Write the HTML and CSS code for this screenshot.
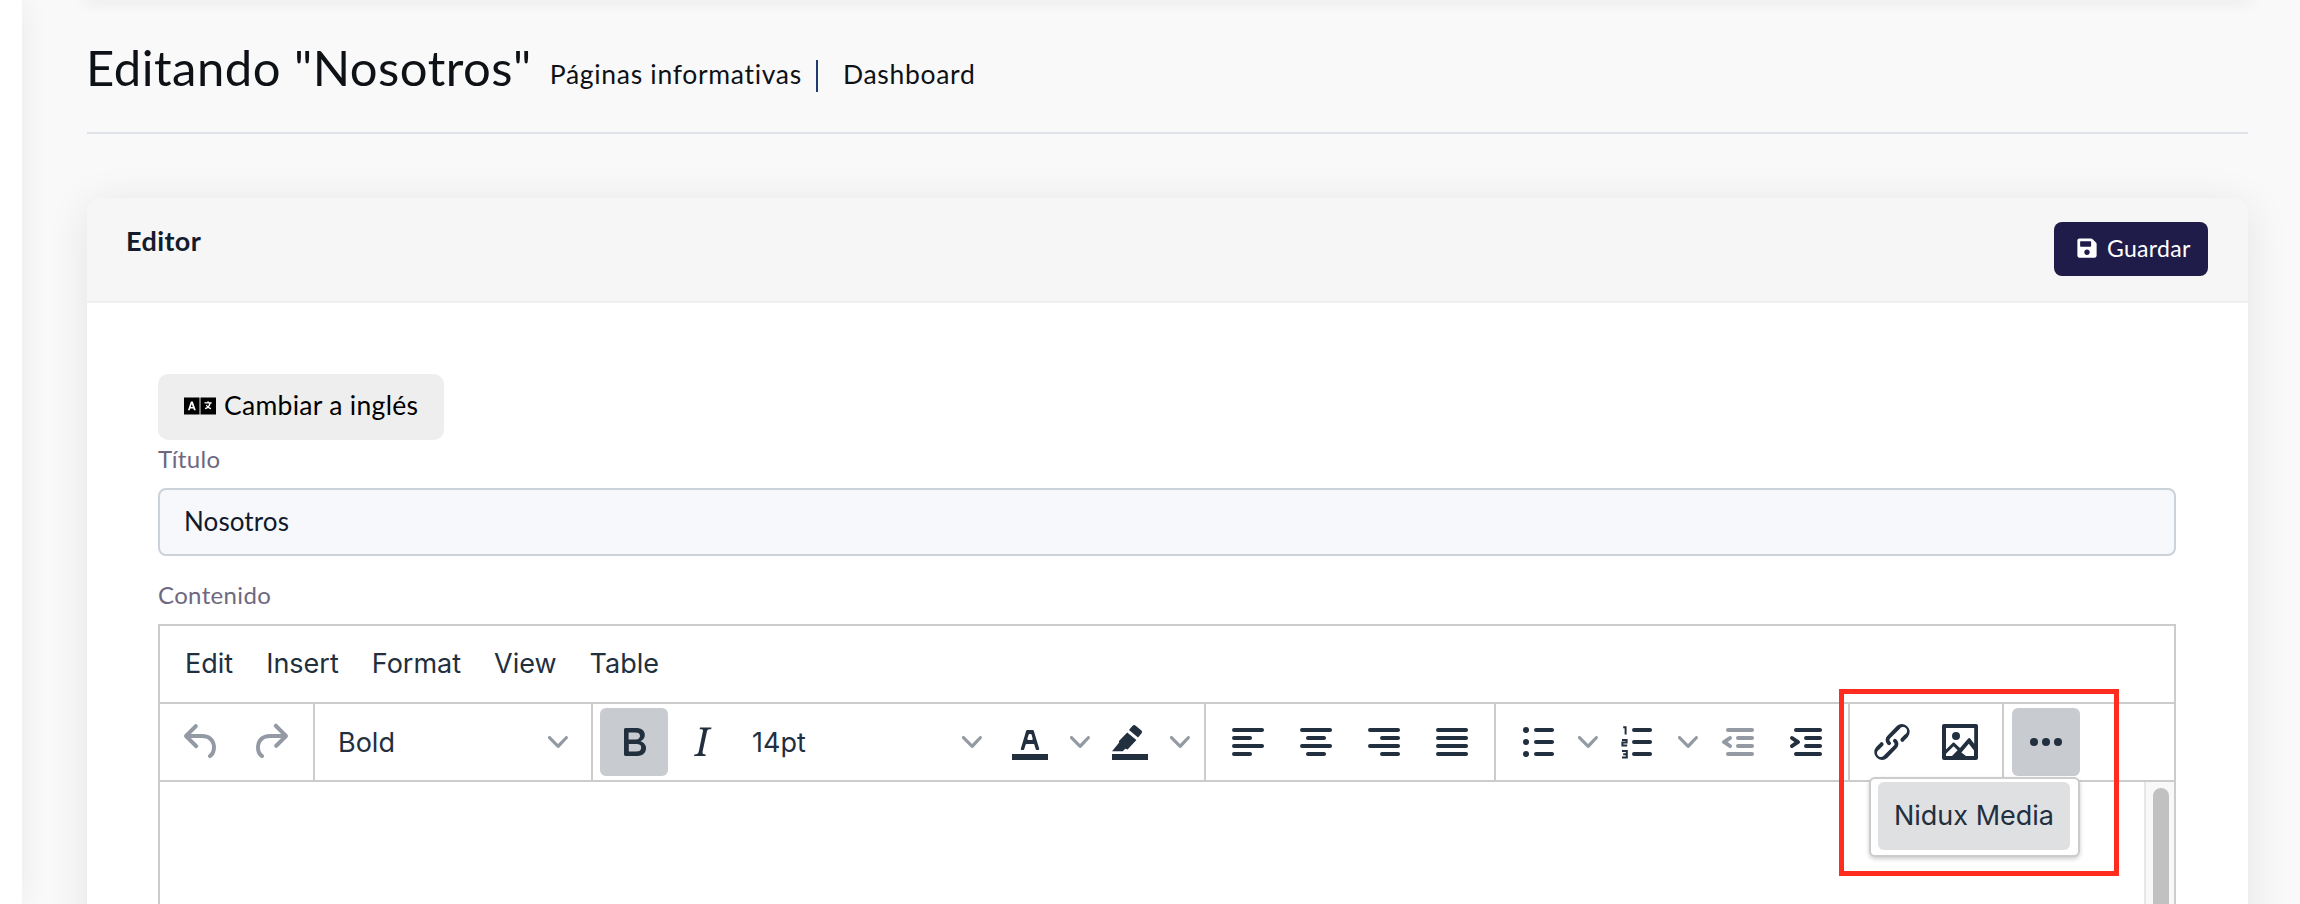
FILE: index.html
```html
<!DOCTYPE html>
<html lang="es">
<head>
<meta charset="utf-8">
<title>Editando "Nosotros"</title>
<link rel="stylesheet" href="styles.css">
</head>
<body>
<svg class="defs" width="0" height="0" aria-hidden="true">
  <symbol id="chev" viewBox="0 0 10 10"><path d="M8.7 2.2c.3-.3.8-.3 1 0 .4.4.4.9 0 1.2L5.7 7.8c-.3.3-.9.3-1.2 0L.2 3.4a.8.8 0 010-1.2c.3-.3.8-.3 1.1 0L5 6l3.7-3.8z"/></symbol>
</svg>
<div class="shell">
  <aside class="rail"></aside>
  <main class="main">
    <div class="topbar"></div>
    <header class="pagehead">
      <h1 class="title">Editando "Nosotros"</h1>
      <nav class="crumbs">
        <a class="crumb crumb-first">Páginas informativas</a>
        <a class="crumb">Dashboard</a>
      </nav>
    </header>
    <section class="card">
      <div class="card-head">
        <span class="card-title">Editor</span>
        <button class="save">
          <svg class="save-icon" viewBox="0 0 448 512"><path d="M433.9 129.9l-83.9-83.9A48 48 0 0 0 316.1 32H48C21.5 32 0 53.5 0 80v352c0 26.5 21.5 48 48 48h352c26.5 0 48-21.5 48-48V163.9a48 48 0 0 0-14.1-34zM224 416c-35.3 0-64-28.7-64-64 0-35.3 28.7-64 64-64s64 28.7 64 64c0 35.3-28.7 64-64 64zm96-304.5V212c0 6.6-5.4 12-12 12H76c-6.6 0-12-5.4-12-12V108c0-6.6 5.4-12 12-12h228.5c3.2 0 6.2 1.3 8.5 3.500l3.500 3.500c2.200 2.200 3.500 5.300 3.500 8.500z"/></svg>
          <span>Guardar</span>
        </button>
      </div>
      <div class="card-body">
        <button class="lang">
          <svg class="lang-icon" viewBox="0 0 32 18"><rect x="0" y="0.500" width="15.500" height="17" fill="#000"/><rect x="16.500" y="0.500" width="15.500" height="17" fill="#000"/><path fill="#fff" d="M6.900 4.500h1.900l3 8.800H9.900l-.5-1.700H6.200l-.5 1.700H3.900zm.9 2.400l-1 3.100h2z"/><path fill="#fff" d="M23.500 4.300h1.200v1h3v1.200h-1c-.3 1.500-.9 2.700-1.700 3.600.6.400 1.300.7 2.200 1l-.5 1.200c-1-.3-1.900-.8-2.600-1.300-.8.600-1.700 1-2.800 1.300l-.5-1.200c.9-.2 1.700-.6 2.300-1-.5-.6-.9-1.200-1.200-1.900l1.100-.4c.2.500.5 1 .9 1.500.6-.7 1-1.600 1.200-2.800H20.500V5.300h3z"/></svg>
          <span>Cambiar a inglés</span>
        </button>
        <label class="field-label field-label-first">Título</label>
        <div class="input">Nosotros</div>
        <label class="field-label">Contenido</label>
        <div class="editor">
          <div class="menubar">
            <span class="menu-item">Edit</span>
            <span class="menu-item">Insert</span>
            <span class="menu-item">Format</span>
            <span class="menu-item">View</span>
            <span class="menu-item">Table</span>
          </div>
          <div class="toolbar">
            <div class="group group-history">
              <span class="tbtn off"><svg class="ico" viewBox="0 0 24 24"><path d="M6.400 8H12c3.700 0 6.200 2 6.800 5.100.6 2.700-.4 5.600-2.300 6.800a1 1 0 01-1-1.800c1.100-.6 1.800-2.700 1.400-4.600-.5-2.100-2.100-3.500-4.900-3.500H6.400l3.300 3.300a1 1 0 11-1.400 1.400l-5-5a1 1 0 010-1.400l5-5a1 1 0 011.400 1.400L6.400 8z"/></svg></span>
              <span class="tbtn off"><svg class="ico" viewBox="0 0 24 24"><path d="M17.600 10H12c-2.800 0-4.400 1.400-4.900 3.500-.4 2 .3 4 1.400 4.600a1 1 0 11-1 1.800c-2-1.200-2.900-4.100-2.300-6.800.6-3 3-5.100 6.800-5.100h5.600l-3.300-3.300a1 1 0 111.400-1.400l5 5a1 1 0 010 1.400l-5 5a1 1 0 01-1.400-1.400l3.300-3.300z"/></svg></span>
            </div>
            <div class="group group-select">
              <span class="select select-format"><span>Bold</span><svg class="chev"><use href="#chev"/></svg></span>
            </div>
            <div class="group group-format">
              <span class="tbtn on"><svg class="ico" viewBox="0 0 24 24"><path d="M7.800 19c-.3 0-.5 0-.6-.2l-.2-.5V5.700c0-.2 0-.4.2-.5l.6-.2h5c1.500 0 2.700.3 3.500 1 .7.600 1.100 1.400 1.100 2.500a3 3 0 01-.6 1.900c-.4.600-1 1-1.600 1.200.4.100.9.300 1.300.6s.8.700 1 1.200c.4.400.5 1 .5 1.600 0 1.300-.4 2.300-1.300 3-.8.700-2.100 1-3.800 1H7.800zm5-8.300c.6 0 1.200-.1 1.600-.5.400-.3.6-.7.6-1.300 0-1.100-.8-1.700-2.300-1.700H9.300v3.500h3.500zm.5 6c.7 0 1.300-.1 1.700-.4.400-.4.6-.9.6-1.500s-.2-1-.7-1.400c-.4-.3-1-.4-2-.4H9.400v3.800h3.900z"/></svg></span>
              <span class="tbtn"><svg class="ico" viewBox="0 0 24 24"><path d="M16.700 4.700l-.1.9h-.3c-.6 0-1 0-1.400.3-.3.3-.4.600-.5 1.100l-2.100 9.800v.6c0 .5.400.8 1.400.8h.2l-.2.8H8l.2-.8h.2c1.100 0 1.800-.5 2-1.500l2-9.800.1-.5c0-.6-.4-.8-1.400-.8h-.3l.2-.9h5.800z"/></svg></span>
              <span class="select select-size"><span>14pt</span><svg class="chev"><use href="#chev"/></svg></span>
              <span class="tbtn"><svg class="ico" viewBox="0 0 24 24"><path d="M3 18h18v3H3z"/><path fill-rule="evenodd" d="M8.700 16h-.8a.5.5 0 01-.5-.6l2.700-9c.1-.3.3-.4.500-.4h2.800c.2 0 .4.100.5.4l2.700 9a.5.5 0 01-.5.600h-.8a.5.5 0 01-.4-.4l-.7-2.200c0-.3-.3-.4-.5-.4h-3.400c-.2 0-.4.100-.5.4l-.7 2.200c0 .3-.2.400-.4.400zm2.600-7.600l-.6 2a.5.500 0 00.5.600h1.600a.5.500 0 00.5-.7l-.5-2c-.1-.2-.3-.3-.5-.3h-.5c-.2 0-.4.100-.5.400z"/></svg></span>
              <span class="splitchev"><svg class="chev"><use href="#chev"/></svg></span>
              <span class="tbtn"><svg class="ico" viewBox="0 0 24 24"><path d="M3 18h18v3H3z"/><path d="M13.300 3.900a1 1 0 011.400-.1l3 2.400a1 1 0 01.100 1.400l-1.800 2.200-4.500-3.800z"/><path d="M10.600 7.200L15.200 11l-4.400 4.800-1.200-.4-1.200 1.200H3l3.600-4.400-.2-.6z"/></svg></span>
              <span class="splitchev"><svg class="chev"><use href="#chev"/></svg></span>
            </div>
            <div class="group group-align">
              <span class="tbtn"><svg class="ico" viewBox="0 0 24 24"><path d="M5 5h14c.6 0 1 .4 1 1s-.4 1-1 1H5a1 1 0 110-2zm0 4h8c.6 0 1 .4 1 1s-.4 1-1 1H5a1 1 0 110-2zm0 8h8c.6 0 1 .4 1 1s-.4 1-1 1H5a1 1 0 010-2zm0-4h14c.6 0 1 .4 1 1s-.4 1-1 1H5a1 1 0 010-2z"/></svg></span>
              <span class="tbtn"><svg class="ico" viewBox="0 0 24 24"><path d="M5 5h14c.6 0 1 .4 1 1s-.4 1-1 1H5a1 1 0 110-2zm3 4h8c.6 0 1 .4 1 1s-.4 1-1 1H8a1 1 0 110-2zm0 8h8c.6 0 1 .4 1 1s-.4 1-1 1H8a1 1 0 010-2zm-3-4h14c.6 0 1 .4 1 1s-.4 1-1 1H5a1 1 0 010-2z"/></svg></span>
              <span class="tbtn"><svg class="ico" viewBox="0 0 24 24"><path d="M5 5h14c.6 0 1 .4 1 1s-.4 1-1 1H5a1 1 0 110-2zm6 4h8c.6 0 1 .4 1 1s-.4 1-1 1h-8a1 1 0 010-2zm0 8h8c.6 0 1 .4 1 1s-.4 1-1 1h-8a1 1 0 010-2zm-6-4h14c.6 0 1 .4 1 1s-.4 1-1 1H5a1 1 0 010-2z"/></svg></span>
              <span class="tbtn"><svg class="ico" viewBox="0 0 24 24"><path d="M5 5h14c.6 0 1 .4 1 1s-.4 1-1 1H5a1 1 0 110-2zm0 4h14c.6 0 1 .4 1 1s-.4 1-1 1H5a1 1 0 110-2zm0 4h14c.6 0 1 .4 1 1s-.4 1-1 1H5a1 1 0 010-2zm0 4h14c.6 0 1 .4 1 1s-.4 1-1 1H5a1 1 0 010-2z"/></svg></span>
            </div>
            <div class="group group-lists">
              <span class="tbtn"><svg class="ico" viewBox="0 0 24 24"><path d="M11 5h8c.6 0 1 .4 1 1s-.4 1-1 1h-8a1 1 0 010-2zm0 6h8c.6 0 1 .4 1 1s-.4 1-1 1h-8a1 1 0 010-2zm0 6h8c.6 0 1 .4 1 1s-.4 1-1 1h-8a1 1 0 010-2z"/><circle cx="6" cy="6" r="1.500"/><circle cx="6" cy="12" r="1.500"/><circle cx="6" cy="18" r="1.500"/></svg></span>
              <span class="splitchev"><svg class="chev"><use href="#chev"/></svg></span>
              <span class="tbtn"><svg class="ico" viewBox="0 0 24 24"><path d="M10 5h8c.6 0 1 .4 1 1s-.4 1-1 1h-8a1 1 0 010-2zm0 6h8c.6 0 1 .4 1 1s-.4 1-1 1h-8a1 1 0 010-2zm0 6h8c.6 0 1 .4 1 1s-.4 1-1 1h-8a1 1 0 010-2z"/><path class="digits" d="M4.600 4.600h1.200V8.300M4 11h2.300v1.300H4.200v1.400h2.400M4 16.500h2.400v3.300H4M4.600 18.100h1.800"/></svg></span>
              <span class="splitchev"><svg class="chev"><use href="#chev"/></svg></span>
              <span class="tbtn off"><svg class="ico" viewBox="0 0 24 24"><path d="M7 5h12c.6 0 1 .4 1 1s-.4 1-1 1H7a1 1 0 110-2zm5 4h7c.6 0 1 .4 1 1s-.4 1-1 1h-7a1 1 0 010-2zm0 4h7c.6 0 1 .4 1 1s-.4 1-1 1h-7a1 1 0 010-2zm-5 4h12a1 1 0 010 2H7a1 1 0 010-2zm1.600-3.800a1 1 0 01-1.200 1.600l-3-2a1 1 0 010-1.600l3-2a1 1 0 011.200 1.600L6.800 12l1.800 1.200z"/></svg></span>
              <span class="tbtn"><svg class="ico" viewBox="0 0 24 24"><path d="M7 5h12c.6 0 1 .4 1 1s-.4 1-1 1H7a1 1 0 110-2zm5 4h7c.6 0 1 .4 1 1s-.4 1-1 1h-7a1 1 0 010-2zm0 4h7c.6 0 1 .4 1 1s-.4 1-1 1h-7a1 1 0 010-2zm-5 4h12a1 1 0 010 2H7a1 1 0 010-2zm-2.600-3.800L6.200 12l-1.800-1.200a1 1 0 011.200-1.600l3 2a1 1 0 010 1.600l-3 2a1 1 0 11-1.200-1.600z"/></svg></span>
            </div>
            <div class="group group-insert">
              <span class="tbtn"><svg class="ico" viewBox="0 0 24 24"><path d="M6.200 12.300a1 1 0 011.400 1.400l-2 2a2 2 0 102.600 2.800l4.800-4.800a1 1 0 000-1.400 1 1 0 111.400-1.300 2.900 2.900 0 010 4L9.600 20a3.900 3.900 0 01-5.500-5.500l2-2zm11.600-.6a1 1 0 01-1.400-1.400l2-2a2 2 0 10-2.600-2.800L11 10.300a1 1 0 000 1.400A1 1 0 119.600 13a2.900 2.900 0 010-4L14.400 4a3.900 3.900 0 015.500 5.500l-2 2z"/></svg></span>
              <span class="tbtn"><svg class="ico" viewBox="0 0 24 24"><path fill-rule="evenodd" d="M4 3h16c.6 0 1 .4 1 1v16c0 .6-.4 1-1 1H4a1 1 0 01-1-1V4c0-.6.4-1 1-1zm1 2v10.700l3.300-3.200c.3-.3.700-.3 1 0L12 15l4.100-4.700c.3-.4.800-.4 1 0l2 2.600V5zm0 13.100V19h3l2.800-2.900-2-2L5 17.900zM19 19v-2.800l-2.600-3.300-3.700 4.300L15 19zM10 11a2 2 0 110-4 2 2 0 010 4z"/></svg></span>
            </div>
            <div class="group group-more">
              <span class="tbtn on"><svg class="ico" viewBox="0 0 24 24"><circle cx="6" cy="12" r="2"/><circle cx="12" cy="12" r="2"/><circle cx="18" cy="12" r="2"/></svg></span>
            </div>
          </div>
          <div class="editor-body">
            <div class="content"></div>
            <div class="scrolltrack"><div class="scrollthumb"></div></div>
          </div>
          <div class="drawer"><span class="drawer-item">Nidux Media</span></div>
          <div class="callout"></div>
        </div>
      </div>
    </section>
  </main>
</div>
</body>
</html>
```
FILE: styles.css
```css
* { box-sizing: border-box; }
html, body { margin: 0; height: 904px; overflow: hidden; background: #f9f9f9; }
body { font-family: "Lato", "Noto Sans", sans-serif; color: #0e1116; }
.defs { display: block; height: 0; }

.shell { display: flex; height: 904px; overflow: hidden; }
.rail { width: 22px; flex: none; background: #fff; box-shadow: 0 0 30px rgba(0,0,0,.07); position: relative; z-index: 1; }
.main { flex: 1; min-width: 0; padding: 0 52px 0 65px; }

.topbar { height: 0; box-shadow: 0 0 14px 3px rgba(0,0,0,.09); }

.pagehead { display: flex; align-items: flex-start; gap: 18px; height: 134px; padding-top: 37px; border-bottom: 2px solid #e0e3e9; }
.title { margin: 0 0 0 -1px; font-size: 49px; line-height: 60px; font-weight: 400; color: #0e1116; letter-spacing: .5px; }
.crumbs { display: flex; align-items: center; margin-top: 23px; }
.crumb { font-size: 26.5px; line-height: 28px; padding-bottom: 4px; color: #0e1116; letter-spacing: .7px; }
.crumb-first { padding-right: 14px; margin-right: 25px; border-right: 2px solid #1c3d6e; }

.card { margin-top: 64px; background: #fff; border-radius: 16px 16px 0 0; box-shadow: 0 6px 44px rgba(0,0,0,.09); }
.card-head { display: flex; justify-content: space-between; align-items: flex-start; padding: 24px 40px 25px 39px; background: #f6f6f6; border-bottom: 2px solid #efefef; border-radius: 16px 16px 0 0; }
.card-title { font-size: 27px; line-height: 38px; font-weight: 700; color: #131c2e; letter-spacing: .4px; }
.save { display: flex; align-items: center; gap: 10px; width: 154px; height: 54px; padding: 0 0 2px 23px; border: 0; border-radius: 8px; background: #1f1c4a; color: #fff; font: 400 23px "Lato", sans-serif; letter-spacing: .3px; }
.save-icon { width: 20px; height: 22px; fill: #fff; }

.card-body { padding: 71px 72px 0 71px; }
.lang { display: flex; align-items: center; gap: 8px; width: 286px; height: 66px; padding: 0 0 4px 26px; border: 0; border-radius: 10px; background: #eee; color: #000; font: 400 26.5px "Lato", sans-serif; letter-spacing: .3px; }
.lang-icon { width: 32px; height: 18px; margin-top: 2px; }

.field-label { display: block; margin-bottom: 16px; font-size: 24px; line-height: 26px; color: #6e6880; letter-spacing: .35px; }
.field-label-first { margin-top: 6px; }
.input { height: 68px; margin-bottom: 26px; padding: 0 24px; border: 2px solid #cbd2da; border-radius: 8px; background: #f6f8fb; font-size: 26px; line-height: 62px; color: #101a2b; letter-spacing: .1px; }

.editor { position: relative; border: 2px solid #ccc; color: #222f3e; font-family: "Inter", "Liberation Sans", sans-serif; }
.menubar { display: flex; align-items: center; gap: 33px; height: 78px; padding: 0 0 0 25px; border-bottom: 2px solid #ccc; font-size: 27px; }
.menu-item { line-height: 32px; }
.toolbar { display: flex; height: 78px; border-bottom: 2px solid #ccc; }
.group { display: flex; height: 76px; padding: 4px 8px; border-left: 2px solid #ccc; }
.group-history { padding: 4px 9px 4px 8px; border-left: 0; }
.group-select { padding: 0; }
.group-format { padding-left: 7px; }

.tbtn { display: flex; align-items: center; justify-content: center; flex: none; width: 68px; height: 68px; border-radius: 6px; fill: #222f3e; }
.tbtn.on { background: #c8cbcf; }
.tbtn.off { fill: #939aa3; }
.ico { width: 48px; height: 48px; }
.digits { fill: none; stroke: #222f3e; stroke-width: 1; }
.chev { width: 20px; height: 20px; fill: #939aa3; flex: none; }
.splitchev { display: flex; align-items: center; justify-content: center; flex: none; width: 32px; height: 68px; }
.select { display: flex; align-items: center; justify-content: space-between; font-size: 27px; flex: none; }
.select-format { width: 276px; padding: 0 23px 0 23px; }
.select-size { width: 260px; height: 68px; padding: 0 14px 0 16px; }

.editor-body { display: flex; height: 320px; }
.content { flex: 1; }
.scrolltrack { width: 30px; flex: none; padding: 6px 5px 0 7px; background: #f8f8f8; border-left: 2px solid #e6e6e6; }
.scrollthumb { height: 400px; border-radius: 8px; background: #c1c1c1; }

.drawer { position: absolute; left: 1709px; top: 151px; width: 211px; height: 80px; padding: 3px 8px 0 7px; background: #fff; border: 2px solid #ccc; border-radius: 6px; box-shadow: 0 2px 4px rgba(0,0,0,.2); }
.drawer-item { display: block; height: 68px; border-radius: 6px; background: #dfe0e2; font-size: 27px; line-height: 68px; text-align: center; color: #222f3e; }
.callout { position: absolute; left: 1679px; top: 63px; width: 280px; height: 187px; border: 5px solid #ff2d20; }
```
